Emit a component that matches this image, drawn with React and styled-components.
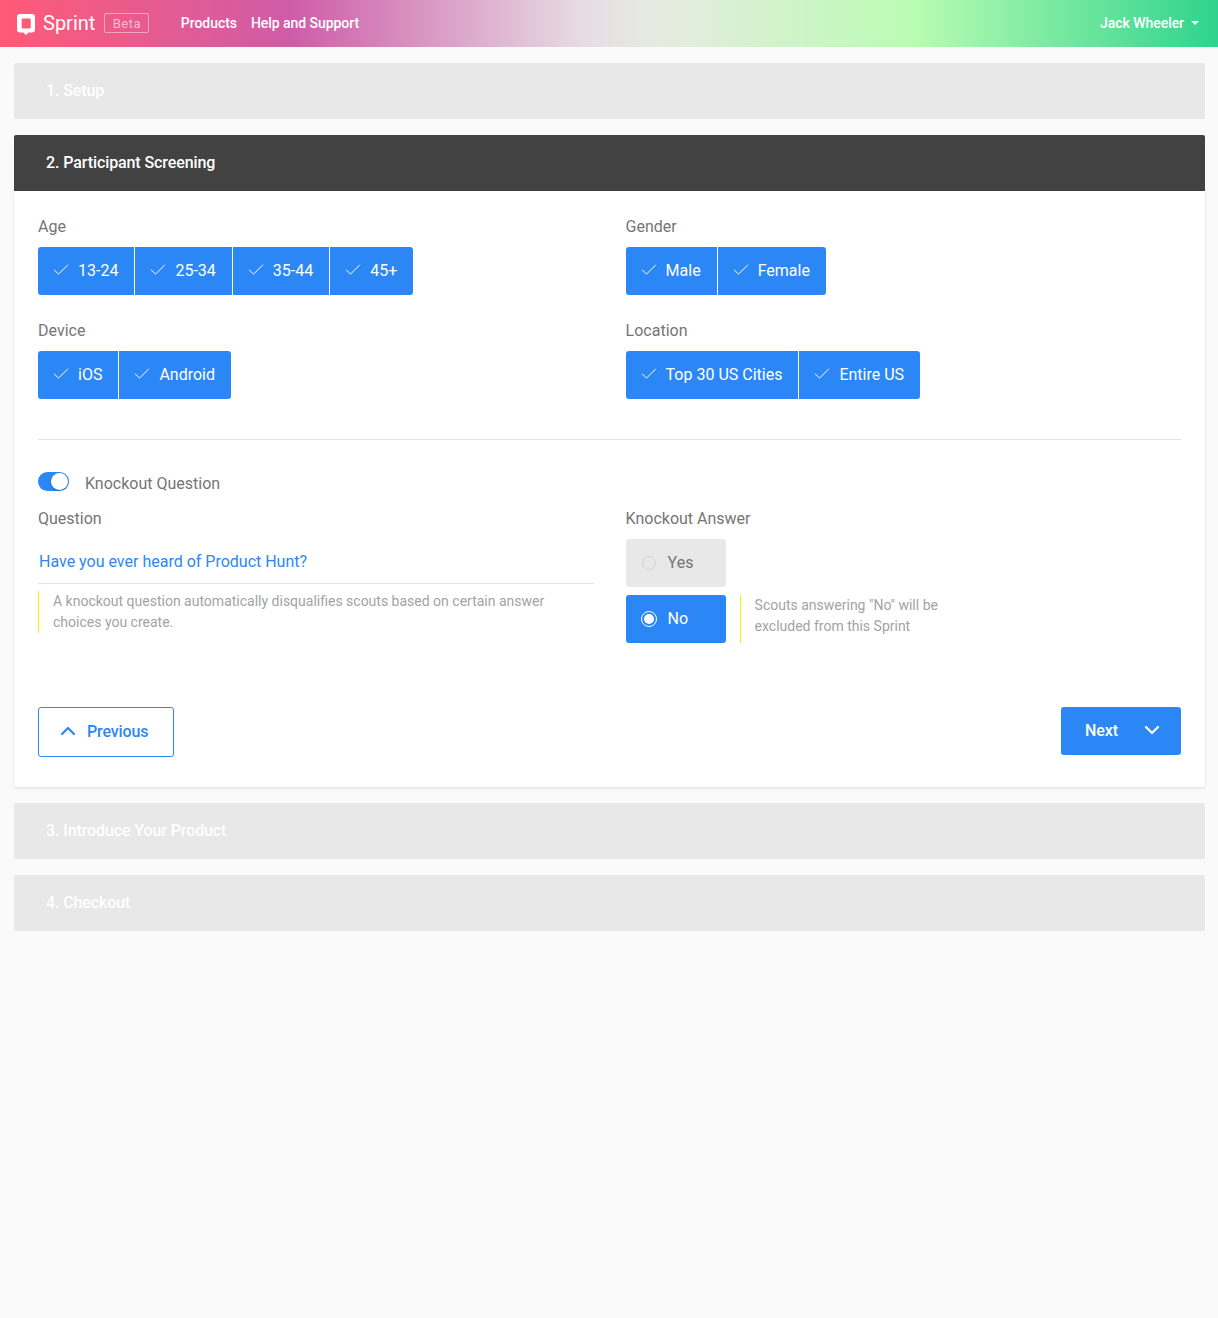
import React from "react";
import styled, { createGlobalStyle } from "styled-components";
import { Check, ChevronUp, ChevronDown } from "lucide-react";

const GlobalStyle = createGlobalStyle`
  * {
    box-sizing: border-box;
  }

  html,
  body {
    margin: 0;
    min-height: 100%;
    background: #fafafa;
    font-family: Roboto, "Liberation Sans", sans-serif;
    font-size: 16px;
    color: #757575;
  }
`;

const Page = styled.div`
  min-height: 1318px;
  background: #fafafa;
`;

const TopBar = styled.header`
  display: flex;
  align-items: center;
  height: 47px;
  padding: 0 19px 2px 16px;
  color: #fff;
  background: linear-gradient(
    90deg,
    #ff5a76 0%,
    #cf5ca8 24%,
    #e6dde4 48%,
    #e6ebe0 54%,
    #b9fcb2 75%,
    #2fd38d 100%
  );
`;

const Brand = styled.div`
  display: flex;
  align-items: center;
  font-size: 20px;
  margin-right: 31.5px;
`;

const LogoMark = styled.svg`
  margin-top: 2px;
`;

const BrandName = styled.span`
  margin: 0 9px 0 7px;
`;

const BetaTag = styled.span`
  display: block;
  width: 45px;
  height: 20px;
  border: 1px solid rgba(255, 255, 255, 0.45);
  border-radius: 2px;
  font-size: 13px;
  line-height: 19px;
  letter-spacing: 0.5px;
  text-align: center;
  color: rgba(255, 255, 255, 0.6);
`;

const NavLink = styled.a`
  font-size: 14px;
  font-weight: 500;
  margin-right: 14px;
  letter-spacing: -0.05px;
`;

const UserMenu = styled.div`
  display: flex;
  align-items: center;
  margin-left: auto;
  font-size: 14px;
  font-weight: 500;
  letter-spacing: -0.05px;
`;

const Caret = styled.span`
  width: 0;
  height: 0;
  margin-left: 7px;
  border-left: 4px solid transparent;
  border-right: 4px solid transparent;
  border-top: 4px solid #fff;
`;

const Steps = styled.main`
  display: flex;
  flex-direction: column;
  gap: 16px;
  padding: 16px 13px 0 14px;
`;

const StepHeader = styled.div`
  display: flex;
  align-items: center;
  height: 56px;
  padding: 0 32px 2px;
  font-size: 16px;
  font-weight: 500;
  color: #fff;
  background: ${(p) => (p.$active ? "#424242" : "#e8e8e8")};
  border-radius: ${(p) => (p.$active ? "2px 2px 0 0" : "2px")};
  letter-spacing: -0.1px;
`;

const StepBody = styled.section`
  padding: 24px 24px 30px;
  background: #fff;
  border-radius: 0 0 2px 2px;
  box-shadow: 0 1px 3px rgba(0, 0, 0, 0.12);
`;

const Grid = styled.div`
  display: grid;
  grid-template-columns: 555.6px 1fr;
  column-gap: 32px;
  row-gap: ${(p) => p.$rowGap || 0}px;
`;

const Label = styled.div`
  font-size: 16px;
  line-height: 24px;
  height: 24px;
  margin-bottom: ${(p) => p.$bottom || 8}px;
`;

const ButtonGroup = styled.div`
  display: flex;
  gap: 1px;
`;

const ChoiceButton = styled.div`
  display: flex;
  align-items: center;
  gap: 10px;
  height: 48px;
  padding: 0 16px 2px;
  color: #fff;
  background: #2b87f5;
  font-size: 16px;

  svg {
    margin: 0 -3px;
  }

  &:first-child {
    border-radius: 3px 0 0 3px;
  }

  &:last-child {
    border-radius: 0 3px 3px 0;
  }
`;

const Divider = styled.hr`
  margin: 40px 0 32px;
  border: 0;
  border-top: 1px solid #e5e5e5;
`;

const ToggleRow = styled.div`
  display: flex;
  align-items: flex-start;
  gap: 16px;
  height: 21px;
  margin-bottom: 14px;
  line-height: 24px;
`;

const Toggle = styled.span`
  position: relative;
  display: block;
  width: 31px;
  height: 19px;
  border-radius: 10px;
  background: #2b87f5;
`;

const ToggleKnob = styled.span`
  position: absolute;
  top: 1px;
  right: 1px;
  width: 17px;
  height: 17px;
  border-radius: 50%;
  background: #fff;
  box-shadow: 0 1px 2px rgba(0, 0, 0, 0.25);
`;

const QuestionInput = styled.div`
  height: 48px;
  padding: 0 1px;
  line-height: 52px;
  color: #2b87f5;
  border-bottom: 1px solid #e5e5e5;
`;

const Note = styled.div`
  margin-top: ${(p) => p.$top || 0}px;
  padding-left: 14px;
  border-left: 1px solid #ffef00;
  font-size: 14px;
  line-height: 21px;
  color: #a3a3a3;
  max-width: ${(p) => p.$width}px;
`;

const RaisedText = styled.span`
  display: block;
  margin: -1px 0 1px;
`;

const AnswerList = styled.div`
  display: flex;
  flex-direction: column;
  gap: 8px;
`;

const AnswerRow = styled.div`
  display: flex;
  gap: 14px;
`;

const AnswerButton = styled.div`
  display: flex;
  align-items: center;
  gap: 11px;
  width: 100px;
  height: 48px;
  padding: 0 0 1px 15px;
  border-radius: 3px;
  color: ${(p) => (p.$on ? "#fff" : "#757575")};
  background: ${(p) => (p.$on ? "#2b87f5" : "#e8e8e8")};
`;

const Radio = styled.span`
  display: block;
  width: ${(p) => (p.$on ? 16 : 14)}px;
  height: ${(p) => (p.$on ? 16 : 14)}px;
  margin: ${(p) => (p.$on ? 0 : "0 1px")};
  padding: 2px;
  border-radius: 50%;
  border: 1px solid ${(p) => (p.$on ? "#fff" : "#d4d4d4")};
  background: ${(p) => (p.$on ? "#fff" : "transparent")};
  background-clip: content-box;
`;

const Actions = styled.div`
  display: flex;
  justify-content: space-between;
  align-items: flex-start;
  margin-top: 64px;
`;

const PreviousButton = styled.button`
  display: flex;
  align-items: center;
  gap: 7px;
  width: 136px;
  height: 50px;
  padding: 0 0 2px 17px;
  border: 1px solid #2b87f5;
  border-radius: 3px;
  background: #fff;
  color: #2b87f5;
  font-family: inherit;
  font-size: 16px;
  font-weight: 500;
  letter-spacing: -0.15px;

  svg {
    margin-top: -1px;
  }
`;

const NextButton = styled.button`
  display: flex;
  align-items: center;
  justify-content: space-between;
  width: 120px;
  height: 48px;
  padding: 0 17px 2px 24px;
  border: 0;
  border-radius: 3px;
  background: #2b87f5;
  color: #fff;
  font-family: inherit;
  font-size: 16px;
  font-weight: 500;
  letter-spacing: -0.1px;
`;

const Logo = () => (
  <LogoMark width="20" height="22" viewBox="0 0 20 22">
    <path
      fill="#fff"
      fillRule="evenodd"
      d="M4 1h12a3 3 0 0 1 3 3v12.500a3 3 0 0 1-3 3h-3.500L10 22l-2.500-2.500H4a3 3 0 0 1-3-3V4a3 3 0 0 1 3-3zm2.700 4.500a1 1 0 0 0-1 1v8a1 1 0 0 0 1 1h7a1 1 0 0 0 1-1v-8a1 1 0 0 0-1-1z"
    />
  </LogoMark>
);

const Choices = ({ items }) => (
  <ButtonGroup>
    {items.map((item) => (
      <ChoiceButton key={item}>
        <Check size={20} strokeWidth={1.2} />
        <span>{item}</span>
      </ChoiceButton>
    ))}
  </ButtonGroup>
);

const App = () => (
  <Page>
    <GlobalStyle />
    <TopBar>
      <Brand>
        <Logo />
        <BrandName>Sprint</BrandName>
        <BetaTag>Beta</BetaTag>
      </Brand>
      <NavLink>Products</NavLink>
      <NavLink>Help and Support</NavLink>
      <UserMenu>
        Jack Wheeler
        <Caret />
      </UserMenu>
    </TopBar>
    <Steps>
      <StepHeader>1. Setup</StepHeader>
      <div>
        <StepHeader $active>2. Participant Screening</StepHeader>
        <StepBody>
          <Grid $rowGap={24}>
            <div>
              <Label>Age</Label>
              <Choices items={["13-24", "25-34", "35-44", "45+"]} />
            </div>
            <div>
              <Label>Gender</Label>
              <Choices items={["Male", "Female"]} />
            </div>
            <div>
              <Label>Device</Label>
              <Choices items={["iOS", "Android"]} />
            </div>
            <div>
              <Label>Location</Label>
              <Choices items={["Top 30 US Cities", "Entire US"]} />
            </div>
          </Grid>
          <Divider />
          <ToggleRow>
            <Toggle>
              <ToggleKnob />
            </Toggle>
            Knockout Question
          </ToggleRow>
          <Grid>
            <div>
              <Label $bottom={5}>Question</Label>
              <QuestionInput>Have you ever heard of Product Hunt?</QuestionInput>
              <Note $top={8} $width={530}>
                <RaisedText>
                  A knockout question automatically disqualifies scouts based on
                  certain answer choices you create.
                </RaisedText>
              </Note>
            </div>
            <div>
              <Label>Knockout Answer</Label>
              <AnswerList>
                <AnswerRow>
                  <AnswerButton>
                    <Radio />
                    Yes
                  </AnswerButton>
                </AnswerRow>
                <AnswerRow>
                  <AnswerButton $on>
                    <Radio $on />
                    No
                  </AnswerButton>
                  <Note $width={215}>
                    Scouts answering "No" will be excluded from this Sprint
                  </Note>
                </AnswerRow>
              </AnswerList>
            </div>
          </Grid>
          <Actions>
            <PreviousButton>
              <ChevronUp size={24} strokeWidth={2.2} />
              Previous
            </PreviousButton>
            <NextButton>
              Next
              <ChevronDown size={24} strokeWidth={2.2} />
            </NextButton>
          </Actions>
        </StepBody>
      </div>
      <StepHeader>3. Introduce Your Product</StepHeader>
      <StepHeader>4. Checkout</StepHeader>
    </Steps>
  </Page>
);

export default App;
